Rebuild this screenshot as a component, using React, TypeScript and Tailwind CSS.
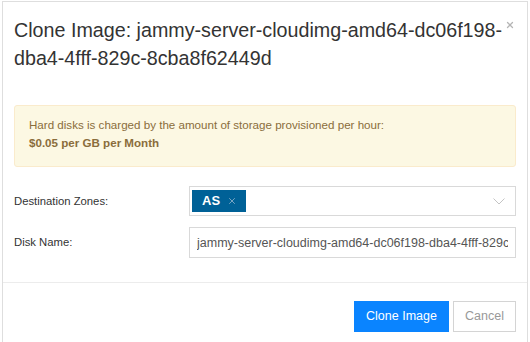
import { X } from 'lucide-react'

const diskName = 'jammy-server-cloudimg-amd64-dc06f198-dba4-4fff-829c-8cba8f62449d'

function ChevronDown() {
  return (
    <svg width="12" height="7" viewBox="0 0 12 7" fill="none" className="text-[#c4c4c4]">
      <path d="M0.5 0.5L6 6L11.5 0.5" stroke="currentColor" strokeWidth="1" />
    </svg>
  )
}

export default function App() {
  return (
    <div
      className="h-[342px] w-[530px] overflow-hidden bg-white pl-[2px] pt-[1px]"
      style={{ fontFamily: '"Liberation Sans", Arial, sans-serif' }}
    >
      <div className="h-[400px] w-[526px] border-l border-t border-r border-[#dedede] bg-white">
        {/* header */}
        <div className="relative px-[11px] pt-[14px]">
          <h2 className="text-[19.7px] leading-[28px] font-normal text-[#333]">
            {'Clone Image: ' + diskName}
          </h2>
          <button className="absolute right-[12px] top-[18px] text-[#b5b5b5]">
            <X className="h-[10px] w-[10px]" strokeWidth={3} />
          </button>
        </div>

        {/* body */}
        <div className="px-[11px]">
          <div className="mt-[33px] rounded-[3px] border border-[#faebcc] bg-[#fcf8e3] px-[14px] pt-[10px] pb-[14px] text-[11.6px] leading-[18px] text-[#8a6d3b]">
            <p>Hard disks is charged by the amount of storage provisioned per hour:</p>
            <p className="font-bold">$0.05 per GB per Month</p>
          </div>

          <div className="mt-[19px] flex items-center">
            <label className="w-[175px] text-[11.3px] text-[#333]">Destination Zones:</label>
            <div className="flex h-[30px] flex-1 items-center border border-[#d9d9d9] bg-white pl-[2px] pr-[10px]">
              <span className="flex h-[22px] items-center gap-[7px] bg-[#006197] pl-[10px] pr-[9px] text-white">
                <span className="text-[13px] font-bold">AS</span>
                <X className="h-[10px] w-[10px] text-[#8fb3cc]" strokeWidth={2} />
              </span>
              <span className="flex-1" />
              <ChevronDown />
            </div>
          </div>

          <div className="mt-[11px] flex items-center">
            <label className="w-[175px] text-[11.3px] text-[#333]">Disk Name:</label>
            <input
              readOnly
              value={diskName}
              className="h-[31px] min-w-0 flex-1 border border-[#d9d9d9] bg-white px-[7px] text-[12.5px] text-[#555] outline-none"
              style={{ fontFamily: '"Liberation Sans", Arial, sans-serif' }}
            />
          </div>
        </div>

        {/* footer */}
        <div className="mt-[24px] flex justify-end gap-[4px] border-t border-[#ececec] px-[11px] pt-[18px]">
          <button className="h-[31px] w-[95px] bg-[#0a84ff] text-[12.5px] text-white">Clone Image</button>
          <button className="h-[31px] w-[63px] border border-[#d4d4d4] bg-white text-[12.5px] text-[#999]">
            Cancel
          </button>
        </div>
      </div>
    </div>
  )
}
